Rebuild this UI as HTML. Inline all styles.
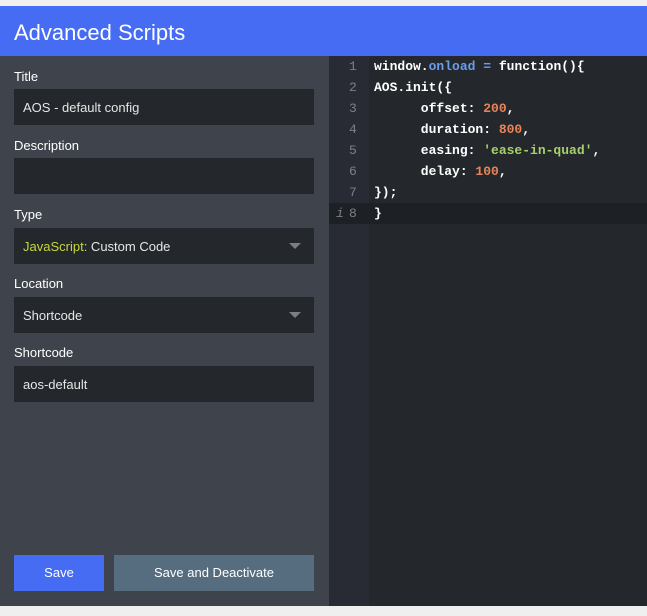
<!DOCTYPE html>
<html><head><style>
*{margin:0;padding:0;box-sizing:border-box}
body{width:647px;height:616px;background:#efefef;position:relative;overflow:hidden;font-family:"Liberation Sans",sans-serif}
.hdr{position:absolute;left:0;top:6px;width:647px;height:50px;background:#456cf3;color:#fff;font-size:22px;padding:14px 0 0 14px}
.left{position:absolute;left:0;top:56px;width:329px;height:550px;background:#3f434b}
.lbl{position:absolute;left:14px;color:#fff;font-size:13px}
.inp{position:absolute;left:14px;width:300px;height:36px;background:#24282c;color:#e6e6e6;font-size:13px;padding:11px 0 0 9px}
.arr{position:absolute;right:13px;top:15px;width:0;height:0;border-left:6px solid transparent;border-right:6px solid transparent;border-top:6px solid #7a7f86}
.btn{position:absolute;top:555px;height:36px;color:#fff;font-size:13px;text-align:center;line-height:36px}
.gut{position:absolute;left:329px;top:56px;width:40px;height:550px;background:#282b33}
.code{position:absolute;left:369px;top:56px;width:278px;height:550px;background:#24282c}
.ln{position:absolute;left:329px;width:318px;height:21px;font-family:"Liberation Mono",monospace;font-size:13px;line-height:21px;color:#fff;font-weight:bold}
.ln .n{position:absolute;left:20px;width:10px;color:#7b8089;font-weight:normal}
.ln .c{position:absolute;left:45px;white-space:pre}
.k{color:#6b9ee8}.num{color:#e8845a}.s{color:#a8cf6e}
</style></head><body>
<div class="hdr">Advanced Scripts</div>
<div class="left"></div>
<div class="lbl" style="top:69px">Title</div>
<div class="inp" style="top:89px">AOS - default config</div>
<div class="lbl" style="top:138px">Description</div>
<div class="inp" style="top:158px"></div>
<div class="lbl" style="top:207px">Type</div>
<div class="inp" style="top:228px"><span style="color:#c5d83a">JavaScript:</span> Custom Code<div class="arr"></div></div>
<div class="lbl" style="top:276px">Location</div>
<div class="inp" style="top:297px">Shortcode<div class="arr"></div></div>
<div class="lbl" style="top:345px">Shortcode</div>
<div class="inp" style="top:366px">aos-default</div>
<div class="btn" style="left:14px;width:90px;background:#456cf3">Save</div>
<div class="btn" style="left:114px;width:200px;background:#566d80">Save and Deactivate</div>
<div class="gut"></div><div class="code"></div>
<div style="position:absolute;left:329px;top:203px;width:318px;height:21px;background:#1d2024"></div>
<div class="ln" style="top:56px"><span class="n">1</span><span class="c">window.<span class="k">onload</span> <span class="k">=</span> function(){</span></div>
<div class="ln" style="top:77px"><span class="n">2</span><span class="c">AOS.init({</span></div>
<div class="ln" style="top:98px"><span class="n">3</span><span class="c">      offset: <span class="num">200</span>,</span></div>
<div class="ln" style="top:119px"><span class="n">4</span><span class="c">      duration: <span class="num">800</span>,</span></div>
<div class="ln" style="top:140px"><span class="n">5</span><span class="c">      easing: <span class="s">'ease-in-quad'</span>,</span></div>
<div class="ln" style="top:161px"><span class="n">6</span><span class="c">      delay: <span class="num">100</span>,</span></div>
<div class="ln" style="top:182px"><span class="n">7</span><span class="c">});</span></div>
<div class="ln" style="top:203px"><span style="position:absolute;left:7px;color:#7b8089;font-style:italic;font-weight:normal">i</span><span class="n">8</span><span class="c">}</span></div>
</body></html>
